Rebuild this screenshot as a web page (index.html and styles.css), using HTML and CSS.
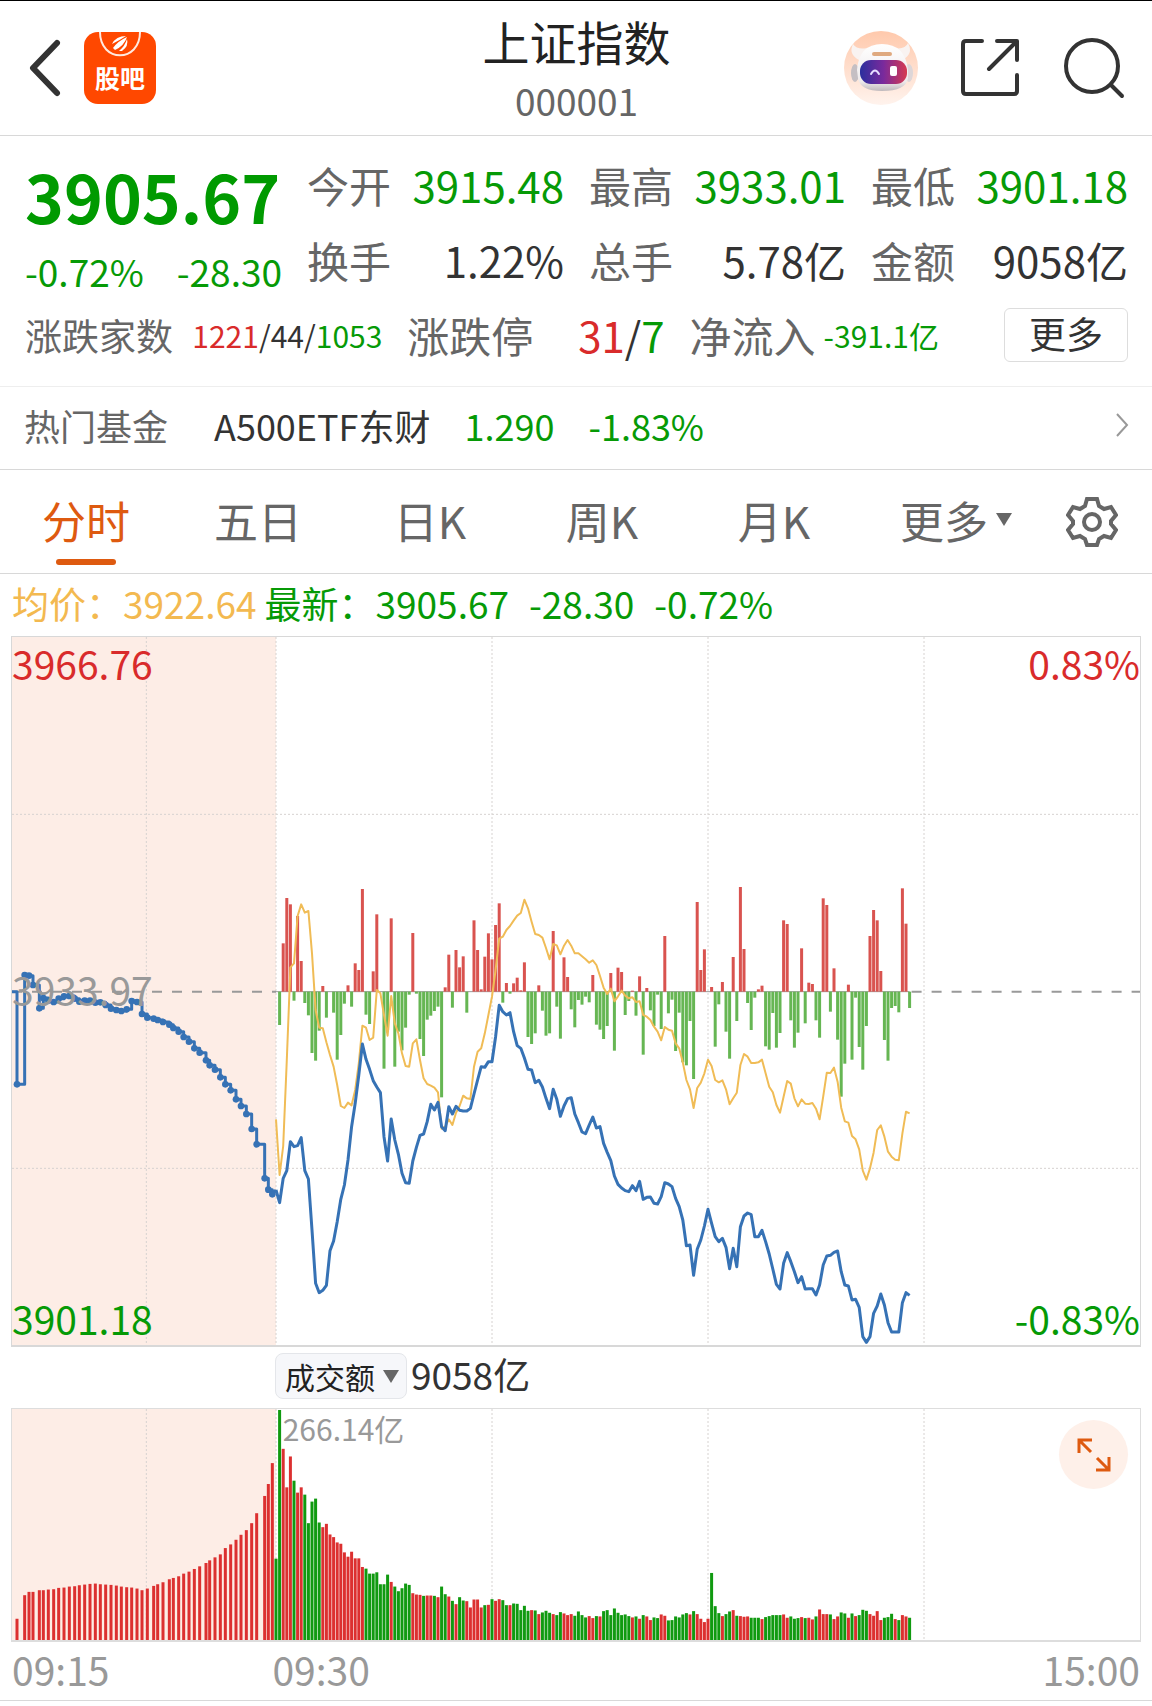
FILE: index.html
```html
<!DOCTYPE html>
<html lang="zh-CN">
<head>
    <meta charset="UTF-8">
    <meta name="viewport" content="width=device-width, initial-scale=1.0">
    <title>上证指数 000001</title>
    <link rel="stylesheet" href="styles.css">
</head>
<body>

    <!-- Header -->
    <header class="header">
        <div class="header-side">
            <button class="icon-button back" aria-label="返回">
                <svg width="36" height="64" viewBox="0 0 36 64"><path d="M29 7 L5 32 L29 57" fill="none" stroke="#333" stroke-width="6" stroke-linecap="round" stroke-linejoin="round"/></svg>
            </button>
            <a href="#" class="guba">
                <svg width="72" height="30" viewBox="0 0 72 30">
                    <path d="M16 0 C16 31 56 31 56 0" fill="none" stroke="#ffe9df" stroke-width="2"/>
                    <path d="M28 12 Q32 4 42 4 Q36 8 28 12Z M29 16 Q34 9 43 5 Q40 14 31 18Z M35 19 Q41 14 43 7 Q45 14 38 19Z" fill="#fff"/>
                </svg>
                <span>股吧</span>
            </a>
        </div>
        <div class="header-title">
            <h1>上证指数</h1>
            <p>000001</p>
        </div>
        <div class="header-side header-right">
            <button class="icon-button" aria-label="智能助手">
                <svg width="76" height="76" viewBox="0 0 76 76">
                    <defs>
                        <linearGradient id="halo" x1="0" y1="0" x2="0" y2="1"><stop offset="0" stop-color="#ffc9ac"/><stop offset="1" stop-color="#fff3ed"/></linearGradient>
                        <linearGradient id="visor" x1="0" y1="0" x2="1" y2="0"><stop offset="0" stop-color="#2b2f9e"/><stop offset="0.5" stop-color="#7a2a9c"/><stop offset="1" stop-color="#d63a50"/></linearGradient>
                        <linearGradient id="head" x1="0" y1="0" x2="0" y2="1"><stop offset="0" stop-color="#fff"/><stop offset="0.8" stop-color="#eeeaeb"/><stop offset="1" stop-color="#bfb9bc"/></linearGradient>
                    </defs>
                    <circle cx="38" cy="38" r="37" fill="url(#halo)"/>
                    <path d="M16 30 Q5 24 10 14 Q14 20 24 18Z M59 30 Q71 24 65 13 Q62 20 51 18Z" fill="#f9f3f1"/>
                    <ellipse cx="12" cy="43" rx="4" ry="9" fill="#c5bfc3"/>
                    <ellipse cx="66" cy="43" rx="4" ry="9" fill="#ddd6d8"/>
                    <path d="M14 40 Q16 14 39 14 Q62 14 65 40 L65 48 Q63 61 39 61 Q17 61 15 48Z" fill="url(#head)"/>
                    <rect x="29" y="22" width="20" height="4" rx="2" fill="#dfa97f"/>
                    <rect x="17" y="30" width="47" height="24" rx="11" fill="url(#visor)"/>
                    <path d="M28 44 Q32 37 36 44" fill="none" stroke="#e6dcff" stroke-width="2" stroke-linecap="round"/>
                    <rect x="47" y="36" width="7" height="10" rx="2" fill="#fff"/>
                </svg>
            </button>
            <button class="icon-button" aria-label="分享">
                <svg width="60" height="60" viewBox="0 0 60 60"><path d="M21 3 H5 Q2 3 2 6 V53 Q2 56 5 56 H53 Q56 56 56 53 V37 M36 3 H56 V22 M55 4 L28 31" fill="none" stroke="#333" stroke-width="4" stroke-linecap="round" stroke-linejoin="round"/></svg>
            </button>
            <button class="icon-button" aria-label="搜索">
                <svg width="62" height="62" viewBox="0 0 62 62"><circle cx="29" cy="29" r="26" fill="none" stroke="#333" stroke-width="4"/><path d="M48 48 L59 59" stroke="#333" stroke-width="4" stroke-linecap="round"/></svg>
            </button>
        </div>
    </header>

    <!-- Quote -->
    <section class="quote">
        <div class="quote-grid">
            <div class="price-block">
                <p class="price">3905.67</p>
                <p class="change"><span>-0.72%</span><span>-28.30</span></p>
            </div>
            <dl class="pairs">
                <div class="pair"><dt>今开</dt><dd class="green">3915.48</dd></div>
                <div class="pair"><dt>换手</dt><dd>1.22%</dd></div>
            </dl>
            <dl class="pairs">
                <div class="pair"><dt>最高</dt><dd class="green">3933.01</dd></div>
                <div class="pair"><dt>总手</dt><dd>5.78亿</dd></div>
            </dl>
            <dl class="pairs">
                <div class="pair"><dt>最低</dt><dd class="green">3901.18</dd></div>
                <div class="pair"><dt>金额</dt><dd>9058亿</dd></div>
            </dl>
        </div>
        <div class="breadth">
            <p class="pair small"><span class="label">涨跌家数</span><span class="value"><span class="red">1221</span>/44/<span class="green">1053</span></span></p>
            <p class="pair"><span class="label">涨跌停</span><span><span class="red">31</span>/<span class="green">7</span></span></p>
            <p class="pair flow"><span class="label">净流入</span><span class="value green">-391.1亿</span></p>
            <button class="more-button">更多</button>
        </div>
    </section>

    <!-- Hot fund -->
    <a href="#" class="fund">
        <span class="label">热门基金</span>
        <span class="fund-name">A500ETF东财</span>
        <span class="green">1.290</span>
        <span class="green">-1.83%</span>
        <svg class="chevron" width="14" height="26" viewBox="0 0 14 26"><path d="M2 2 L12 13 L2 24" fill="none" stroke="#999" stroke-width="2"/></svg>
    </a>

    <!-- Period tabs -->
    <nav class="tabs">
        <button class="tab active">分时</button>
        <button class="tab">五日</button>
        <button class="tab">日K</button>
        <button class="tab">周K</button>
        <button class="tab">月K</button>
        <button class="tab tab-more">更多<span class="arrow"></span></button>
        <button class="settings" aria-label="设置">
            <svg width="52" height="52" viewBox="0 0 52 52" fill="none" stroke="#666" stroke-width="4">
                <path d="M21 3 H31 L33 10 L38 13 L45 11 L50 19 L45 25 V28 L50 34 L45 42 L38 40 L33 43 L31 49 H21 L19 43 L14 40 L7 42 L2 34 L7 28 V25 L2 19 L7 11 L14 13 L19 10 Z"/>
                <circle cx="26" cy="26" r="8"/>
            </svg>
        </button>
    </nav>

    <p class="legend">
        <span class="avg">均价：3922.64</span>
        <span class="green">最新：3905.67</span>
        <span class="green step">-28.30</span>
        <span class="green step">-0.72%</span>
    </p>

    <!-- Price chart -->
    <div class="chart price-chart">
        <svg id="priceChart" viewBox="0 -1064 3384 2124" preserveAspectRatio="none"></svg>
        <span class="tag top-left red">3966.76</span>
        <span class="tag top-right red">0.83%</span>
        <span class="tag middle-left">3933.97</span>
        <span class="tag bottom-left green">3901.18</span>
        <span class="tag bottom-right green">-0.83%</span>
    </div>

    <div class="indicator">
        <div class="select-box">
            <select class="indicator-select" aria-label="指标">
                <option>成交额</option>
            </select>
            <span class="arrow"></span>
        </div>
        <span class="indicator-value">9058亿</span>
    </div>

    <!-- Volume chart -->
    <div class="chart volume-chart">
        <svg id="volumeChart" viewBox="0 0 3384 696" preserveAspectRatio="none"></svg>
        <span class="tag peak">266.14亿</span>
        <button class="expand" aria-label="全屏">
            <svg width="34" height="34" viewBox="0 0 34 34" fill="none" stroke="#de5a10" stroke-width="3"><path d="M15 2 H2 V15 M2 2 L14 14 M32 19 V32 H19 M32 32 L20 20"/></svg>
        </button>
    </div>

    <div class="times">
        <span>09:15</span>
        <span class="time-open">09:30</span>
        <span class="time-close">15:00</span>
    </div>

    <script src="script.js"></script>
</body>
</html>
```
FILE: styles.css
```css
* {
    margin: 0;
    padding: 0;
    box-sizing: border-box;
}

body {
    font-family: "Noto Sans CJK SC", sans-serif;
    font-size: 37px;
    line-height: 48px;
    color: #333;
    background: #fff;
    border-top: 1px solid #000;
}

button,
select {
    font: inherit;
    color: inherit;
    background: none;
    border: none;
    cursor: pointer;
}

a {
    color: inherit;
    text-decoration: none;
}

svg {
    display: block;
}

.green {
    color: #069a06;
}

.red {
    color: #d92b2b;
}

.label,
dt {
    color: #666;
}

/* Header */
.header {
    display: flex;
    align-items: center;
    height: 135px;
    padding: 0 27px 0 28px;
    border-bottom: 1px solid #d8d8d8;
}

.header-side {
    flex: 1;
    display: flex;
    align-items: center;
    gap: 20px;
}

.header-right {
    justify-content: flex-end;
    gap: 42px;
}

.header-title {
    padding-top: 4px;
    text-align: center;
}

.header-title h1 {
    font-size: 47px;
    font-weight: 400;
    line-height: 60px;
    color: #222;
}

.header-title p {
    line-height: 58px;
    color: #666;
}

.guba {
    width: 72px;
    height: 72px;
    border-radius: 14px;
    background: #ff4800;
    color: #fff;
    font-size: 25px;
    font-weight: 700;
    line-height: 30px;
    text-align: center;
}

/* Quote */
.quote {
    padding: 11px 24px 15px 25px;
    border-bottom: 1px solid #eee;
}

.quote-grid {
    display: grid;
    grid-template-columns: repeat(4, minmax(0, 1fr));
    gap: 25px;
}

.price {
    font-size: 66px;
    font-weight: 700;
    line-height: 96px;
    color: #009a00;
}

.change {
    display: flex;
    justify-content: space-between;
    line-height: 56px;
    color: #069a06;
}

.pair {
    display: flex;
    justify-content: space-between;
    align-items: center;
    font-size: 42px;
    line-height: 75px;
    white-space: nowrap;
}

.breadth {
    display: grid;
    grid-template-columns: 357fr 257fr 257fr 156fr;
    column-gap: 25px;
    align-items: center;
}

.breadth .pair {
    line-height: 72px;
}

.breadth .value {
    font-size: 30px;
}

.breadth .small {
    font-size: 37px;
}

.breadth .flow {
    justify-content: flex-start;
    gap: 8px;
}

.more-button {
    justify-self: end;
    width: 124px;
    height: 54px;
    padding-bottom: 4px;
    border: 1px solid #ddd;
    border-radius: 6px;
}

/* Hot fund */
.fund {
    display: flex;
    align-items: center;
    height: 83px;
    padding: 0 23px 6px 24px;
    border-bottom: 1px solid #d8d8d8;
    font-size: 36px;
}

.fund-name {
    margin: 0 34px 0 46px;
}

.fund .green {
    margin-right: 34px;
}

.chevron {
    margin-left: auto;
}

/* Tabs */
.tabs {
    display: flex;
    height: 104px;
    border-bottom: 1px solid #d8d8d8;
}

.tab {
    position: relative;
    flex: 1;
    padding-bottom: 4px;
    font-size: 44px;
    color: #666;
}

.tab.active {
    color: #de5a10;
}

.tab.active::after {
    content: "";
    position: absolute;
    bottom: 8px;
    left: 50%;
    width: 60px;
    height: 6px;
    margin-left: -30px;
    border-radius: 3px;
    background: #de5a10;
}

.tab-more {
    display: flex;
    align-items: center;
    justify-content: flex-end;
    gap: 8px;
}

.tab-more .arrow {
    margin-right: 20px;
}

.arrow {
    border: 8px solid transparent;
    border-top: 13px solid #666;
    border-bottom: none;
}

.settings {
    display: flex;
    flex: none;
    align-items: center;
    justify-content: center;
    width: 120px;
}

/* Chart legend */
.legend {
    display: flex;
    gap: 8px;
    height: 62px;
    padding: 0 12px;
    line-height: 58px;
}

.avg {
    color: #f3b950;
}

.step {
    margin-left: 12px;
}

/* Charts */
.chart {
    position: relative;
    margin: 0 11px;
}

.chart > svg {
    width: 100%;
}

.price-chart {
    border: 1px solid #d8d8d8;
    border-bottom-width: 2px;
}

.price-chart > svg {
    height: 708px;
}

.volume-chart {
    border: 1px solid #ddd;
    border-bottom-width: 2px;
}

.volume-chart > svg {
    height: 231px;
}

.tag {
    position: absolute;
    font-size: 39px;
}

.top-left {
    top: 2px;
    left: 0;
}

.top-right {
    top: 2px;
    right: 0;
}

.middle-left {
    top: 328px;
    left: 0;
    color: #999;
}

.bottom-left {
    bottom: 3px;
    left: 0;
}

.bottom-right {
    bottom: 3px;
    right: 0;
}

.indicator {
    display: flex;
    align-items: center;
    gap: 4px;
    height: 61px;
    padding: 0 0 4px 275px;
}

.select-box {
    position: relative;
}

.select-box .arrow {
    position: absolute;
    top: 17px;
    right: 8px;
    pointer-events: none;
}

.indicator-select {
    appearance: none;
    display: block;
    width: 132px;
    height: 46px;
    padding-left: 9px;
    border: 1px solid #e4e6ea;
    border-radius: 8px;
    background: #f6f7fa;
    font-size: 30px;
    line-height: 40px;
    color: #222;
}

.indicator-value {
    padding-bottom: 4px;
}

.peak {
    top: 0;
    left: 24%;
    font-size: 30px;
    line-height: 38px;
    color: #999;
}

.expand {
    position: absolute;
    top: 11px;
    right: 12px;
    display: flex;
    align-items: center;
    justify-content: center;
    width: 69px;
    height: 69px;
    border-radius: 50%;
    background: #fef0e9;
}

.times {
    display: flex;
    justify-content: space-between;
    height: 59px;
    padding: 0 12px;
    border-bottom: 1px solid #d8d8d8;
    font-size: 39px;
    line-height: 54px;
    color: #999;
}

.time-open {
    margin-right: auto;
    margin-left: 163px;
}

/* Chart drawing */
.auction {
    fill: #fdede6;
}

.grid {
    fill: none;
    stroke: #d6d2d0;
    stroke-width: 1;
    stroke-dasharray: 2 2;
    vector-effect: non-scaling-stroke;
}

.base {
    stroke: #999;
    stroke-width: 2;
    stroke-dasharray: 10 10;
    vector-effect: non-scaling-stroke;
}

.base-solid {
    stroke: #999;
    stroke-width: 1;
    vector-effect: non-scaling-stroke;
}

.line {
    fill: none;
    stroke-linejoin: round;
    vector-effect: non-scaling-stroke;
}

.price-line {
    stroke: #3672b5;
    stroke-width: 3;
}

.avg-line {
    stroke: #f0bc56;
    stroke-width: 2;
}

.dot {
    fill: #3672b5;
}

.force-up {
    fill: #d9534f;
}

.force-down {
    fill: #66b653;
}

.vol-up {
    fill: #dc3030;
}

.vol-down {
    fill: #109a10;
}
```
FILE: script.js
```js
// Chart units: one minute is 10.8 wide, the previous close is y = 0.
const MINUTE = 10.8;
const OPEN = 792;

// Opening auction: [x, price y, volume]
const auction = [
    [15, 278, 64], [38, -50, 135], [51, -48, 145], [63, -20, 145], [82, 50, 150], [94, 19, 150],
    [109, 27, 152], [125, 31, 153], [140, 21, 157], [156, 14, 158], [172, 13, 161], [188, 21, 162],
    [202, 30, 165], [218, 27, 167], [234, 27, 169], [250, 33, 170], [265, 32, 168], [281, 40, 167],
    [297, 51, 166], [313, 55, 164], [328, 58, 161], [344, 53, 159], [359, 28, 158], [375, 31, 155],
    [390, 67, 150], [406, 78, 155], [425, 81, 163], [437, 85, 168], [453, 91, 174], [472, 99, 183],
    [484, 109, 187], [500, 120, 192], [515, 136, 200], [531, 150, 206], [547, 170, 214], [563, 183, 222],
    [582, 206, 232], [593, 221, 240], [609, 234, 249], [625, 257, 258], [640, 278, 277], [656, 296, 288],
    [672, 323, 302], [687, 343, 317], [703, 367, 331], [719, 412, 352], [734, 458, 382], [758, 560, 434],
    [769, 594, 470], [781, 608, 533]
];

// One value a minute from 09:30
const price = [
    595, 633, 560, 537, 450, 465, 462, 438, 537, 562, 715, 875, 903, 896, 881, 777, 748, 690, 623, 580,
    505, 405, 335, 250, 157, 203, 233, 267, 286, 303, 435, 508, 382, 445, 488, 545, 573, 575, 508, 467,
    431, 427, 390, 338, 355, 332, 405, 417, 345, 367, 344, 356, 358, 358, 350, 307, 265, 225, 227, 210,
    210, 135, 41, 60, 70, 63, 120, 162, 170, 199, 233, 235, 273, 266, 286, 320, 351, 293, 323, 374,
    343, 321, 318, 367, 393, 421, 426, 400, 376, 409, 405, 455, 482, 507, 553, 578, 589, 597, 600, 582,
    597, 569, 623, 617, 616, 635, 637, 615, 573, 577, 585, 620, 645, 685, 762, 760, 851, 773, 745, 703,
    653, 695, 735, 750, 740, 767, 831, 770, 825, 705, 673, 664, 669, 735, 735, 716, 750, 787, 832, 878,
    892, 815, 783, 810, 840, 873, 855, 892, 891, 891, 910, 880, 820, 793, 791, 782, 778, 840, 880, 883,
    925, 923, 947, 1035, 1052, 1035, 965, 943, 907, 940, 993, 1021, 1021, 1021, 933, 903, 911
];

const average = [
    383, 550, 463, 205, -73, -85, -227, -262, -237, -242, -115, 55, 108, 110, 152, 190, 225, 280, 343, 349,
    333, 341, 295, 215, 102, 108, 145, 138, -5, 5, 70, 132, 13, 95, 125, 185, 223, 225, 155, 143,
    205, 260, 277, 282, 288, 302, 411, 405, 383, 400, 363, 343, 312, 320, 322, 225, 180, 170, 125, 70,
    15, -65, -159, -165, -185, -197, -213, -228, -236, -276, -250, -210, -173, -170, -162, -131, -97, -143, -139, -112,
    -138, -155, -138, -115, -115, -106, -97, -87, -94, -80, -47, -12, 7, -9, 29, 14, -3, 12, 20, 17,
    31, 29, 70, 75, 85, 105, 120, 146, 106, 114, 117, 155, 170, 212, 265, 293, 349, 289, 273, 245,
    204, 223, 265, 272, 266, 293, 338, 320, 303, 220, 187, 195, 214, 214, 212, 204, 245, 285, 302, 340,
    363, 315, 268, 276, 320, 344, 323, 336, 337, 334, 351, 383, 315, 243, 244, 228, 270, 348, 389, 393,
    433, 443, 473, 537, 564, 530, 483, 415, 401, 435, 480, 495, 504, 506, 425, 360, 365
];

// Buying (+) and selling (-) force
const force = [
    0, -100, 145, 281, 262, -27, 227, 92, -34, -71, -184, -207, -117, 17, -78, 0, -63, -204, -130, -36,
    19, -45, 85, 65, 308, -69, -97, 61, 232, 0, -231, -115, 220, -225, -120, -176, -108, -9, 176, -6,
    -142, -193, -84, -72, -58, -45, -317, 13, 111, -48, 125, 73, 106, -63, 0, 214, 125, 7, 105, 175,
    97, 200, 265, -33, 26, -6, 25, 42, 4, 88, -136, -157, -125, 19, -57, -132, -125, 182, -45, -141,
    103, 44, -53, -107, -25, -39, -15, -32, 50, -99, -114, -142, -103, 56, -177, 72, 59, -70, -28, 3,
    -72, 46, -189, 11, -56, -103, -9, -112, 167, -65, -24, -178, -63, -212, -221, -88, -262, 269, 65, 127,
    0, 14, -165, -38, 29, -120, -201, 104, -88, 314, 128, -34, -115, -18, 7, 18, -164, -174, -64, -168,
    -124, 214, 203, -86, -168, -123, 130, -95, 27, 23, -86, -138, 280, 260, -60, 70, -144, -315, -216, 21,
    -204, -18, -166, -234, -103, 167, 245, 214, 62, -145, -207, -49, -43, -62, 310, 204, -49
];

// Turnover, negative for a falling minute
const volume = [
    -245, -693, 576, 460, 553, -480, 444, 460, -438, -352, -417, -426, -354, 340, 350, 318, 310, 294, 290, 264,
    251, 266, 246, 246, 220, -215, -200, -200, -204, -168, -168, -197, 175, -161, -147, -156, -170, -166, 141, 137,
    136, -133, 134, 134, -133, 129, -161, -138, 131, -118, 108, -129, -119, 117, 98, 122, 122, 98, -105, 106,
    -123, 118, 123, -120, -105, 105, -110, -109, -90, -103, -88, 90, -89, 78, -83, -88, -82, 78, -75, -84,
    80, 75, 78, -73, -86, -75, -68, 72, 66, -72, 71, -87, -90, -75, -95, -82, -75, -77, -72, 68,
    -71, 64, -75, 71, 60, -68, -66, 77, 73, -59, -60, -71, -68, -77, -81, 77, -87, 78, 64, 54,
    64, -202, -102, -81, 72, -78, -86, 90, -73, 72, 70, 71, -67, -67, -67, 63, -69, -72, -75, -75,
    -75, 77, 67, -71, -64, -66, 69, -66, 67, 62, -71, 92, 78, 78, -77, 63, 71, -83, -80, 67,
    -80, 72, -75, -91, -88, 78, 73, 87, 60, -67, -69, -79, 63, -60, 75, 71, -67
];

function bar(x, y, height, name, width) {
    return `<rect class="${name}" x="${x - width / 2}" y="${y}" width="${width}" height="${height}"/>`;
}

function polyline(values, name) {
    const points = values.map((v, i) => `${OPEN + i * MINUTE},${v}`).join(" ");
    return `<polyline class="line ${name}" points="${points}"/>`;
}

function verticals(top, bottom) {
    return [403, 792, 1440, 2088, 2736].map(x => `<path class="grid" d="M${x} ${top}V${bottom}"/>`).join("");
}

function drawPrice() {
    const end = OPEN + (price.length - 1) * MINUTE;
    let out = `<rect class="auction" x="0" y="-1064" width="${OPEN}" height="2124"/>`;
    out += verticals(-1064, 1060);
    out += `<path class="grid" d="M0 -532H3384"/><path class="grid" d="M0 530H3384"/>`;
    out += `<path class="base" d="M0 0H${OPEN}"/><path class="base-solid" d="M${OPEN} 0H${end}"/><path class="base" d="M${end + 6} 0H3384"/>`;
    force.forEach((v, i) => {
        out += bar(OPEN + i * MINUTE, Math.min(-v, 0), Math.abs(v), v > 0 ? "force-up" : "force-down", 9);
    });
    out += polyline(average, "avg-line");

    let path = "M0 0";
    auction.forEach(([x, y]) => { path += `H${x}V${y}`; });
    out += `<path class="line price-line" d="${path}L${OPEN} ${price[0]}"/>`;
    auction.forEach(([x, y]) => { out += `<circle class="dot" cx="${x}" cy="${y}" r="10"/>`; });
    out += polyline(price, "price-line");
    document.getElementById("priceChart").innerHTML = out;
}

function drawVolume() {
    let out = `<rect class="auction" x="0" y="0" width="${OPEN}" height="696"/>` + verticals(0, 696);
    auction.forEach(([x, , v]) => { out += bar(x, 696 - v, v, "vol-up", 9); });
    volume.forEach((v, i) => {
        out += bar(OPEN + i * MINUTE, 696 - Math.abs(v), Math.abs(v), v > 0 ? "vol-up" : "vol-down", 9);
    });
    document.getElementById("volumeChart").innerHTML = out;
}

drawPrice();
drawVolume();
```
